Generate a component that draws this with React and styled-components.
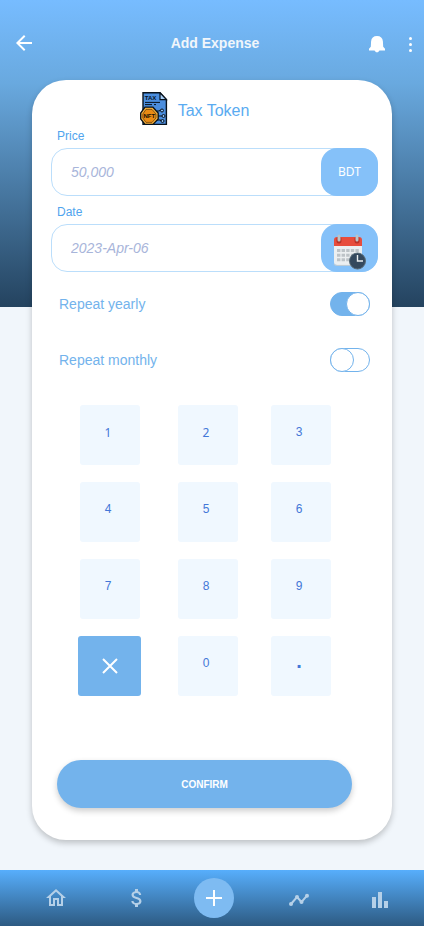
import React from "react";
import styled, { createGlobalStyle } from "styled-components";

const GlobalStyle = createGlobalStyle`
  *, *::before, *::after { box-sizing: border-box; }
  body { margin: 0; background: #f1f6fb; font-family: "Liberation Sans", Arial, sans-serif; }
  button, input { font: inherit; border: 0; padding: 0; background: none; }
  button { cursor: pointer; }
  svg { display: block; }
`;

const Page = styled.div`
  min-height: 100vh;
  display: flex;
  flex-direction: column;
  background: linear-gradient(180deg, #77bcff 0%, #69a9df 27%, #24435f 100%) top / 100% 307px no-repeat #f1f6fb;
`;

const Header = styled.header`
  height: 80px;
  padding: 6px 2px 0 12px;
  display: grid;
  grid-template-columns: 1fr auto 1fr;
  align-items: center;
  color: #fff;
`;

const Title = styled.h1`
  margin: 0;
  padding-right: 4px;
  font-size: 14px;
  line-height: 20px;
  color: #f1f6fb;
`;

const Actions = styled.div`
  display: flex;
  justify-content: flex-end;
  gap: 9px;
`;

const IconButton = styled.button`
  width: 24px;
  height: 24px;
  color: inherit;
`;

const Card = styled.main`
  flex: 1;
  margin: 0 32px 30px;
  padding: 12px 14px 32px 19px;
  display: flex;
  flex-direction: column;
  border-radius: 34px;
  background: #fff;
  box-shadow: 0 3px 6px rgba(0, 0, 0, 0.22);
`;

const Heading = styled.div`
  display: flex;
  align-items: center;
  justify-content: center;
  gap: 10px;
  height: 34px;
  padding-right: 40px;
`;

const HeadingText = styled.h2`
  margin: 0;
  padding-top: 4px;
  font-size: 16px;
  line-height: 20px;
  font-weight: 400;
  color: #5aabf1;
`;

const Field = styled.div`
  margin-bottom: 6px;
`;

const FieldLabel = styled.label`
  display: block;
  padding: 2px 6px 4px;
  font-size: 12px;
  line-height: 16px;
  color: #4fa4ee;
`;

const FieldBox = styled.div`
  display: flex;
  height: 48px;
  border: 1px solid #bbdefb;
  border-radius: 16px;
`;

const TextInput = styled.input`
  flex: 1;
  min-width: 0;
  padding-left: 19px;
  font-size: 14px;
  font-style: italic;
  color: #a8b5da;
  outline: none;
`;

const FieldButton = styled.button`
  display: flex;
  align-items: center;
  justify-content: center;
  width: 57px;
  margin: -1px;
  padding: ${(p) => (p.$icon ? "8px 0 0" : "0 0 2px")};
  border-radius: 16px;
  background: #85c1f9;
  color: #fff;
  font-family: "Noto Sans", sans-serif;
  font-size: 12px;
`;

const ToggleRow = styled.div`
  display: flex;
  align-items: center;
  justify-content: space-between;
  height: 24px;
  margin: ${(p) => (p.$first ? "14px" : "32px")} 8px 0;
`;

const ToggleLabel = styled.label`
  font-size: 14px;
  line-height: 20px;
  color: #73b3ec;
`;

const Toggle = styled.input`
  appearance: none;
  display: flex;
  justify-content: flex-start;
  width: 40px;
  height: 24px;
  margin: 0;
  border: 1px solid #73b3ec;
  border-radius: 12px;
  background: #fff;
  cursor: pointer;

  &::before {
    content: "";
    width: 24px;
    height: 24px;
    margin: -1px;
    border: 1px solid #73b3ec;
    border-radius: 50%;
    background: #fff;
  }

  &:checked {
    justify-content: flex-end;
    background: #73b3ec;
  }
`;

const Keypad = styled.div`
  display: grid;
  grid-template-columns: 98px 93px 60px;
  grid-auto-rows: 60px;
  row-gap: 17px;
  justify-content: center;
  margin-top: 33px;
  padding-right: 18px;
`;

const Key = styled.button`
  width: 60px;
  border-radius: 3px;
  padding: 0 4px 6px 0;
  background: #f0f8ff;
  color: #4377d8;
  font-family: ${(p) => (p.$wide ? '"Noto Sans", sans-serif' : '"Liberation Sans", Arial, sans-serif')};
  font-size: 12px;
`;

const PointKey = styled(Key)`
  padding-bottom: 10px;
  font-size: 20px;
  font-weight: 700;
`;

const ClearKey = styled.button`
  display: flex;
  align-items: center;
  justify-content: center;
  width: 63px;
  margin-left: -2px;
  border-radius: 3px;
  background: #73b3ec;
`;

const Confirm = styled.button`
  height: 48px;
  margin: auto 26px 0 6px;
  border-radius: 24px;
  background: #73b3ec;
  box-shadow: 0 3px 6px rgba(0, 0, 0, 0.2);
  color: #fff;
  font-size: 10px;
  font-weight: 700;
`;

const BottomNav = styled.nav`
  display: grid;
  grid-template-columns: 1fr 40px 1fr;
  align-items: center;
  height: 56px;
  padding-left: 4px;
  background: linear-gradient(180deg, #57aefc, #2d5a82);
`;

const NavGroup = styled.div`
  display: flex;
  justify-content: ${(p) => (p.$end ? "flex-end" : "flex-start")};
  gap: 35px;
  padding: ${(p) => (p.$end ? "0 34px 0 0" : "0 0 0 42px")};
`;

const NavLink = styled.a`
  display: grid;
  place-items: center;
  width: 46px;
  height: 40px;
  color: #b5d0e8;
`;

const AddButton = styled.button`
  display: grid;
  place-items: center;
  width: 40px;
  height: 40px;
  border-radius: 50%;
  background: #7ebbf2;
  color: #fff;
`;

const BackIcon = () => (
  <svg width="24" height="24" viewBox="0 0 24 24" fill="currentColor">
    <path d="M20 11H7.83l5.59-5.59L12 4l-8 8 8 8 1.41-1.41L7.83 13H20z" />
  </svg>
);

const BellIcon = () => (
  <svg width="24" height="24" viewBox="0 0 24 24" fill="currentColor">
    <path d="M12 5C8.4 5 6.4 7 6.1 10.2L5.8 15.8L4 17.8V19.6H9.5L11 21.2H13L14.5 19.6H20V17.8L18.2 15.8L17.9 10.2C17.6 7 15.6 5 12 5Z" />
  </svg>
);

const MoreIcon = () => (
  <svg width="24" height="24" viewBox="0 0 24 24" fill="currentColor">
    <circle cx="12.5" cy="7.5" r="1.5" />
    <circle cx="12.5" cy="13.5" r="1.5" />
    <circle cx="12.5" cy="19.5" r="1.5" />
  </svg>
);

const TaxIcon = () => (
  <svg width="28" height="34" viewBox="0 0 28 34" aria-hidden="true">
    <path d="M3 .8H20L26.4 7.6V32.4H3Z" fill="#4b8ede" stroke="#08121c" strokeWidth="1.4" />
    <path d="M20 .8V7.6H26.4Z" fill="#a9d0f8" stroke="#08121c" strokeWidth="1.2" />
    <text x="4.8" y="7.6" fontSize="6" fontWeight="700" fontFamily="Liberation Sans" fill="#08121c">TAX</text>
    <path d="M5 10.4H20M5 12.6H12M14 12.6H16" stroke="#08121c" strokeWidth="1" />
    <path d="M17 19H19L21 18M18 24H22M17 28H20L22 29" fill="none" stroke="#08121c" strokeWidth="1.2" />
    <g fill="#8fc0f5" stroke="#08121c" strokeWidth="1">
      <circle cx="22" cy="18.5" r="1.5" />
      <circle cx="23.5" cy="24" r="1.5" />
      <circle cx="22.5" cy="29" r="1.5" />
    </g>
    <path d="M5 15.2H13L18.2 21V27L13 32.4H5L.7 27V21Z" fill="#f9b23a" stroke="#08121c" strokeWidth="1.3" />
    <path d="M6 17.4H12L16 22V26L12 30.4H6L2.8 26V22Z" fill="#e98b13" stroke="#5c3508" strokeWidth=".7" />
    <text x="3.4" y="26" fontSize="6" fontWeight="700" fontFamily="Liberation Sans" fill="#171006">NFT</text>
  </svg>
);

const CalendarIcon = () => (
  <svg width="34" height="36" viewBox="0 0 34 36" aria-hidden="true">
    <path d="M1 12H29V28Q29 31 26 31H4Q1 31 1 28Z" fill="#eceff1" />
    <path d="M1 30Q1 31.4 4 31.4H26" fill="none" stroke="#c3ccd2" />
    <path d="M1 12V6Q1 3 4 3H26Q29 3 29 6V12Z" fill="#e74c3c" />
    <path d="M6 5V7M24 5V7" stroke="#b83227" strokeWidth="5" strokeLinecap="round" />
    <path d="M6 2V6M24 2V6" stroke="#bdc3c7" strokeWidth="3" strokeLinecap="round" />
    <g stroke="#bdc3c7" strokeWidth="3" strokeDasharray="3.4 1.2">
      <path d="M4 16.5H26" />
      <path d="M4 21.2H26" />
      <path d="M4 25.8H20" />
    </g>
    <circle cx="24.5" cy="27" r="8" fill="#34495e" stroke="#596c78" strokeWidth="1" />
    <path d="M24.5 21V27H30" fill="none" stroke="#ecf0f1" strokeWidth="1.4" />
  </svg>
);

const CloseIcon = () => (
  <svg width="24" height="24" viewBox="0 0 24 24" fill="none" stroke="#fff" strokeWidth="2">
    <path d="M5 5L19 19M19 5L5 19" />
  </svg>
);

const HomeIcon = () => (
  <svg width="24" height="24" viewBox="0 0 24 24" fill="currentColor">
    <path d="M12 5.69l5 4.5V18h-2v-6H9v6H7v-7.81l5-4.5M12 3L2 12h3v8h6v-6h2v6h6v-8h3L12 3z" />
  </svg>
);

const DollarIcon = () => (
  <svg width="24" height="24" viewBox="0 0 24 24" fill="currentColor">
    <path d="M11.8 10.9c-2.27-.59-3-1.2-3-2.15 0-1.09 1.01-1.85 2.7-1.85 1.78 0 2.44.85 2.5 2.1h2.21c-.07-1.72-1.12-3.3-3.21-3.81V3h-3v2.16c-1.94.42-3.5 1.68-3.5 3.61 0 2.31 1.91 3.46 4.7 4.13 2.5.6 3 1.48 3 2.41 0 .69-.49 1.79-2.7 1.79-2.06 0-2.87-.92-2.98-2.1h-2.2c.12 2.19 1.76 3.42 3.68 3.83V21h3v-2.15c1.95-.37 3.5-1.5 3.5-3.55 0-2.84-2.43-3.81-4.7-4.4z" />
  </svg>
);

const PlusIcon = () => (
  <svg width="24" height="24" viewBox="0 0 24 24" stroke="currentColor" strokeWidth="2">
    <path d="M4 12H20M12 4V20" />
  </svg>
);

const TrendIcon = () => (
  <svg width="24" height="24" viewBox="0 0 24 24" fill="currentColor">
    <path d="M4 18L10 11L14.5 16L20 9.7" fill="none" stroke="currentColor" strokeWidth="2" />
    <circle cx="4" cy="18" r="2" />
    <circle cx="10" cy="11" r="2" />
    <circle cx="14.5" cy="16" r="2" />
    <circle cx="20" cy="9.7" r="2" />
  </svg>
);

const BarsIcon = () => (
  <svg width="24" height="24" viewBox="0 0 24 24" fill="currentColor">
    <path d="M4 11H8V22H4ZM10 6H14V22H10ZM16 15H20V22H16Z" />
  </svg>
);

const DIGITS = ["1", "2", "3", "4", "5", "6", "7", "8", "9"];

export default function App() {
  return (
    <Page>
      <GlobalStyle />
      <Header>
        <IconButton aria-label="Back"><BackIcon /></IconButton>
        <Title>Add Expense</Title>
        <Actions>
          <IconButton aria-label="Notifications"><BellIcon /></IconButton>
          <IconButton aria-label="More options"><MoreIcon /></IconButton>
        </Actions>
      </Header>

      <Card>
        <Heading>
          <TaxIcon />
          <HeadingText>Tax Token</HeadingText>
        </Heading>

        <Field>
          <FieldLabel htmlFor="price">Price</FieldLabel>
          <FieldBox>
            <TextInput id="price" inputMode="decimal" defaultValue="50,000" />
            <FieldButton type="button">BDT</FieldButton>
          </FieldBox>
        </Field>
        <Field>
          <FieldLabel htmlFor="date">Date</FieldLabel>
          <FieldBox>
            <TextInput id="date" defaultValue="2023-Apr-06" />
            <FieldButton type="button" $icon aria-label="Choose date"><CalendarIcon /></FieldButton>
          </FieldBox>
        </Field>

        <ToggleRow $first>
          <ToggleLabel htmlFor="yearly">Repeat yearly</ToggleLabel>
          <Toggle id="yearly" type="checkbox" defaultChecked />
        </ToggleRow>
        <ToggleRow>
          <ToggleLabel htmlFor="monthly">Repeat monthly</ToggleLabel>
          <Toggle id="monthly" type="checkbox" />
        </ToggleRow>

        <Keypad>
          {DIGITS.map((digit) => (
            <Key key={digit} type="button" $wide={Number(digit) < 3}>{digit}</Key>
          ))}
          <ClearKey type="button" aria-label="Clear"><CloseIcon /></ClearKey>
          <Key type="button">0</Key>
          <PointKey type="button">.</PointKey>
        </Keypad>

        <Confirm type="button">CONFIRM</Confirm>
      </Card>

      <BottomNav>
        <NavGroup $end>
          <NavLink href="#home" aria-label="Home"><HomeIcon /></NavLink>
          <NavLink href="#money" aria-label="Money"><DollarIcon /></NavLink>
        </NavGroup>
        <AddButton type="button" aria-label="Add"><PlusIcon /></AddButton>
        <NavGroup>
          <NavLink href="#trends" aria-label="Trends"><TrendIcon /></NavLink>
          <NavLink href="#reports" aria-label="Reports"><BarsIcon /></NavLink>
        </NavGroup>
      </BottomNav>
    </Page>
  );
}
